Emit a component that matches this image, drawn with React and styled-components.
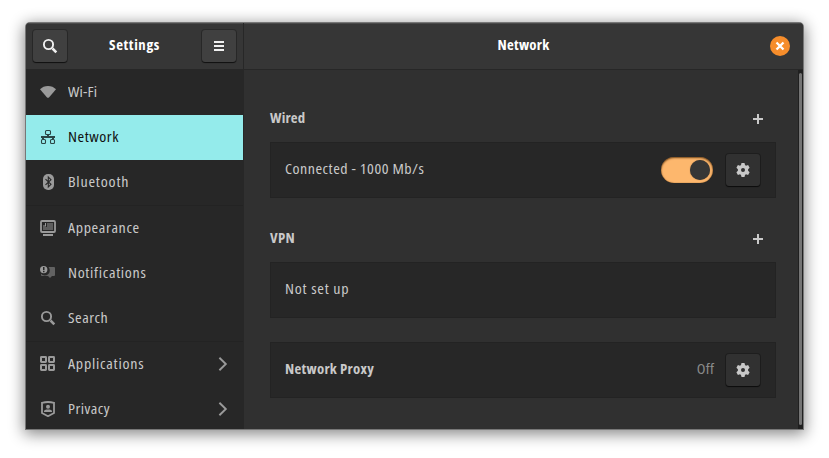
import React from "react";
import styled, { createGlobalStyle } from "styled-components";

const GlobalStyle = createGlobalStyle`
  * { box-sizing: border-box; }
  html, body { margin: 0; background: #fff; }
  body { overflow: hidden; }
  button { font: inherit; color: inherit; padding: 0; border: 0; background: none; }
  svg { display: block; }
`;

const Desktop = styled.div`
  width: 829px;
  height: 458px;
  padding: 23px 26px 29px;
  overflow: hidden;
  background: #fff;
  font-family: "Open Sans", "Noto Sans", sans-serif;
  font-size: 14.8px;
  font-stretch: 75%;
  color: #c9c9c9;
`;

const Window = styled.main`
  width: 777px;
  height: 406px;
  display: grid;
  grid-template-columns: 217px 1px 559px;
  grid-template-rows: 46px 1px 359px;
  border-radius: 4px 4px 0 0;
  overflow: hidden;
  background: #303030;
  box-shadow: 0 0 0 1px #777, 0 3px 15px 2px rgba(0, 0, 0, 0.48);
`;

const Header = styled.header`
  display: flex;
  align-items: center;
  justify-content: space-between;
  padding: 0 ${(p) => p.$pad};
  background: #363636;
  box-shadow: inset 0 1px #4a4a4a;
`;

const HeaderGap = styled.div`
  width: 20px;
`;

const Divider = styled.div`
  background: #272727;
  ${(p) => p.$across && "grid-column: 1 / -1;"}
`;

const Text = styled.span`
  display: block;
  width: max-content;
  line-height: 18px;
  padding-bottom: 4px;
  white-space: pre;
  font-weight: ${(p) => (p.$bold ? 700 : 400)};
  color: ${(p) => p.$color || "inherit"};
  letter-spacing: ${(p) => p.$track || 0}px;
  transform: ${(p) => (p.$bold ? "none" : "scaleX(1.08)")};
  transform-origin: ${(p) => p.$origin || "left"} center;
`;

const IconButton = styled.button`
  width: 34px;
  height: 32px;
  display: grid;
  place-items: center;
  border-radius: 3px;
  background: ${(p) => (p.$raised ? "#404040" : "#313131")};
  color: ${(p) => (p.$raised ? "#f0f0f0" : "#c8c8c8")};
  box-shadow: 0 0 0 1px rgba(0, 0, 0, 0.22), 0 1px 1px rgba(0, 0, 0, 0.6);
`;

const CloseButton = styled.button`
  width: 20px;
  height: 20px;
  display: grid;
  place-items: center;
  border-radius: 50%;
  background: #f68d2b;
  color: #fff;
`;

const Sidebar = styled.nav`
  background: #272727;
  overflow: hidden;
`;

const NavGroup = styled.div`
  & + & { border-top: 1px solid #232323; }
`;

const NavItem = styled.a`
  height: 45px;
  display: flex;
  align-items: center;
  gap: 12px;
  padding: 0 12px 1px 14px;
  background: ${(p) => (p.$active ? "#94ebeb" : "transparent")};
  color: ${(p) => (p.$active ? "#111" : "#c9c9c9")};
  & > svg { flex: none; color: ${(p) => (p.$active ? "#2b4646" : "#9a9a9a")}; }
`;

const NavText = styled.div`
  flex: 1;
  padding-top: 1px;
`;

const Body = styled.section`
  display: flex;
  background: #303030;
`;

const Panel = styled.div`
  flex: 1;
  padding: 37px 22px 0 26px;
`;

const SectionHead = styled.div`
  height: 24px;
  margin-bottom: 11px;
  display: flex;
  align-items: center;
  justify-content: space-between;
  padding-right: 13px;
`;

const Card = styled.div`
  height: 56px;
  margin-bottom: ${(p) => p.$after}px;
  display: flex;
  align-items: center;
  padding: 0 15px 0 14px;
  border: 1px solid #232323;
  background: #272727;
`;

const CardLabel = styled.div`
  flex: 1;
`;

const Switch = styled.button`
  width: 52px;
  height: 26px;
  padding: 3px;
  margin-right: 13px;
  display: flex;
  justify-content: flex-end;
  border-radius: 13px;
  background: #fdb76d;
  box-shadow: inset 0 1px 2px rgba(70, 35, 0, 0.75), inset 0 0 1px rgba(90, 50, 0, 0.6);
`;

const Knob = styled.span`
  width: 20px;
  height: 20px;
  border-radius: 50%;
  background: #363636;
  box-shadow: 0 0 1px rgba(0, 0, 0, 0.5);
`;

const Status = styled.div`
  margin-right: 12px;
`;

const ScrollTrack = styled.div`
  width: 5px;
  padding: 3px 1px 4px;
  background: #202020;
  display: flex;
`;

const ScrollThumb = styled.div`
  flex: 1;
  border-radius: 2px;
  background: #747474;
`;

const Icon = ({ children, size = 16 }) => (
  <svg width={size} height={size} viewBox={`0 0 ${size} ${size}`} fill="currentColor">
    {children}
  </svg>
);

const SearchIcon = () => (
  <Icon>
    <circle cx="6.5" cy="6.5" r="4.6" fill="none" stroke="currentColor" strokeWidth="1.9" />
    <path d="M9.6 11.4 11.4 9.6 15.2 13.4 13.4 15.2z" />
  </Icon>
);

const MenuIcon = () => (
  <Icon>
    <path d="M3 3h10v2H3zM3 7h10v2H3zM3 11h10v2H3z" />
  </Icon>
);

const CloseIcon = () => (
  <Icon size={10}>
    <path d="M1.5 1.5 8.5 8.5M8.5 1.5 1.5 8.5" stroke="currentColor" strokeWidth="2.3" />
  </Icon>
);

const PlusIcon = () => (
  <Icon size={10}>
    <path d="M4 0h2v4h4v2H6v4H4V6H0V4h4z" />
  </Icon>
);

const WifiIcon = () => (
  <Icon>
    <path d="M0 5.3C2 3.2 4.9 2 8 2s6 1.2 8 3.3L9.2 13.2Q8 14.5 6.8 13.2z" />
  </Icon>
);

const NetworkIcon = () => (
  <Icon>
    <g fill="none" stroke="currentColor" strokeWidth="1.1">
      <rect x="5.5" y="1.5" width="5" height="4" rx="1" />
      <rect x="1.5" y="10.5" width="4" height="4" rx="1" />
      <rect x="10.5" y="10.5" width="4" height="4" rx="1" />
    </g>
    <path d="M7 6h2v1h6v2h-1v1h-2V9H4v1H2V9H1V7h6z" />
  </Icon>
);

const BluetoothIcon = () => (
  <Icon>
    <rect x="3" y="0" width="11" height="16" rx="5" />
    <path d="M5.5 5.2 11 10.3 8.3 13V3L11 5.7 5.5 10.8" fill="none" stroke="#272727" strokeWidth="1.1" />
  </Icon>
);

const AppearanceIcon = () => (
  <Icon>
    <rect x="1" y="1" width="14" height="11" rx="1" fill="none" stroke="currentColor" strokeWidth="1.8" />
    <path d="M7 3h6v7H3V7h4z" opacity=".48" />
    <path d="M6 3v3.5H3V5.5h2V3z" />
    <path d="M3 14h10v2H3z" />
  </Icon>
);

const NotificationsIcon = () => (
  <Icon>
    <path d="M8.5 2H14q1 0 1 1v7q0 1-1 1h-2l-2 2-2-2H2q-1 0-1-1V8.8A5 5 0 0 0 8.5 2z" opacity=".52" />
    <path fillRule="evenodd" d="M3.7.9a3.7 3.7 0 1 0 0 7.4 3.7 3.7 0 1 0 0-7.4zM3 2h1.5v3.2H3zm0 3.9h1.5v1.3H3z" />
  </Icon>
);

const ApplicationsIcon = () => (
  <Icon>
    <g fill="none" stroke="currentColor" strokeWidth="2">
      <rect x="1" y="1" width="5" height="5" rx=".4" />
      <rect x="9" y="1" width="5" height="5" rx=".4" />
      <rect x="1" y="9" width="5" height="5" rx=".4" />
      <rect x="9" y="9" width="5" height="5" rx=".4" />
    </g>
  </Icon>
);

const PrivacyIcon = () => (
  <Icon>
    <path d="M2 1.8Q8 .2 14 1.8V12L8 15.2 2 12z" fill="none" stroke="currentColor" strokeWidth="1.8" />
    <circle cx="8" cy="5.8" r="2" />
    <path d="M4 11V10.4C4 9 5.5 8.5 8 8.5s4 .5 4 1.9v.6z" />
  </Icon>
);

const ChevronIcon = () => (
  <Icon>
    <path d="M4.4 1.8 10.8 8l-6.4 6.2" fill="none" stroke="currentColor" strokeWidth="1.9" />
  </Icon>
);

const GearIcon = () => (
  <Icon>
    <path
      fillRule="evenodd"
      d="M6.5 1h3l.5 2.1 1 .6 2.1-.6 1.5 2.6-1.5 1.5v1.6l1.5 1.5-1.5 2.6-2.1-.6-1 .6-.5 2.1h-3L6 12.9l-1-.6-2.1.6-1.5-2.6 1.5-1.5V7.2L1.4 5.7l1.500-2.600L5 3.700l1-.6zM8 6a2 2 0 1 0 0 4 2 2 0 1 0 0-4z"
    />
  </Icon>
);

const groups = [
  [
    { label: "Wi-Fi", icon: WifiIcon, track: 0.15 },
    { label: "Network", icon: NetworkIcon, track: 0.5, active: true },
    { label: "Bluetooth", icon: BluetoothIcon, track: 0.75 },
  ],
  [
    { label: "Appearance", icon: AppearanceIcon, track: 0.58 },
    { label: "Notifications", icon: NotificationsIcon, track: 0.63 },
    { label: "Search", icon: SearchIcon, track: 0.45 },
  ],
  [
    { label: "Applications", icon: ApplicationsIcon, track: 0.7, submenu: true },
    { label: "Privacy", icon: PrivacyIcon, track: 0.42, submenu: true },
  ],
];

export default function App() {
  return (
    <Desktop>
      <GlobalStyle />
      <Window>
        <Header $pad="7px">
          <IconButton $raised aria-label="Search settings"><SearchIcon /></IconButton>
          <Text $bold $color="#fff" $track={0.62}>Settings</Text>
          <IconButton $raised aria-label="Menu"><MenuIcon /></IconButton>
        </Header>
        <Divider />
        <Header $pad="13px">
          <HeaderGap />
          <Text $bold $color="#fff" $track={0.25}>Network</Text>
          <CloseButton aria-label="Close"><CloseIcon /></CloseButton>
        </Header>
        <Divider $across />
        <Sidebar>
          {groups.map((items, i) => (
            <NavGroup key={i}>
              {items.map(({ label, icon: Glyph, track, active, submenu }) => (
                <NavItem key={label} $active={active}>
                  <Glyph />
                  <NavText><Text $track={track}>{label}</Text></NavText>
                  {submenu && <ChevronIcon />}
                </NavItem>
              ))}
            </NavGroup>
          ))}
        </Sidebar>
        <Divider />
        <Body>
          <Panel>
            <SectionHead>
              <Text $bold $track={0.2}>Wired</Text>
              <PlusIcon />
            </SectionHead>
            <Card $after={29}>
              <CardLabel><Text $track={0.46}>Connected - 1000 Mb/s</Text></CardLabel>
              <Switch role="switch" aria-checked="true"><Knob /></Switch>
              <IconButton aria-label="Wired options"><GearIcon /></IconButton>
            </Card>
            <SectionHead>
              <Text $bold $track={0.3}>VPN</Text>
              <PlusIcon />
            </SectionHead>
            <Card $after={24}>
              <CardLabel><Text $track={0.72}>Not set up</Text></CardLabel>
            </Card>
            <Card $after={0}>
              <CardLabel><Text $bold $track={0.28}>Network Proxy</Text></CardLabel>
              <Status><Text $color="#8b8b8b" $track={0.3} $origin="right">Off</Text></Status>
              <IconButton aria-label="Proxy options"><GearIcon /></IconButton>
            </Card>
          </Panel>
          <ScrollTrack><ScrollThumb /></ScrollTrack>
        </Body>
      </Window>
    </Desktop>
  );
}
